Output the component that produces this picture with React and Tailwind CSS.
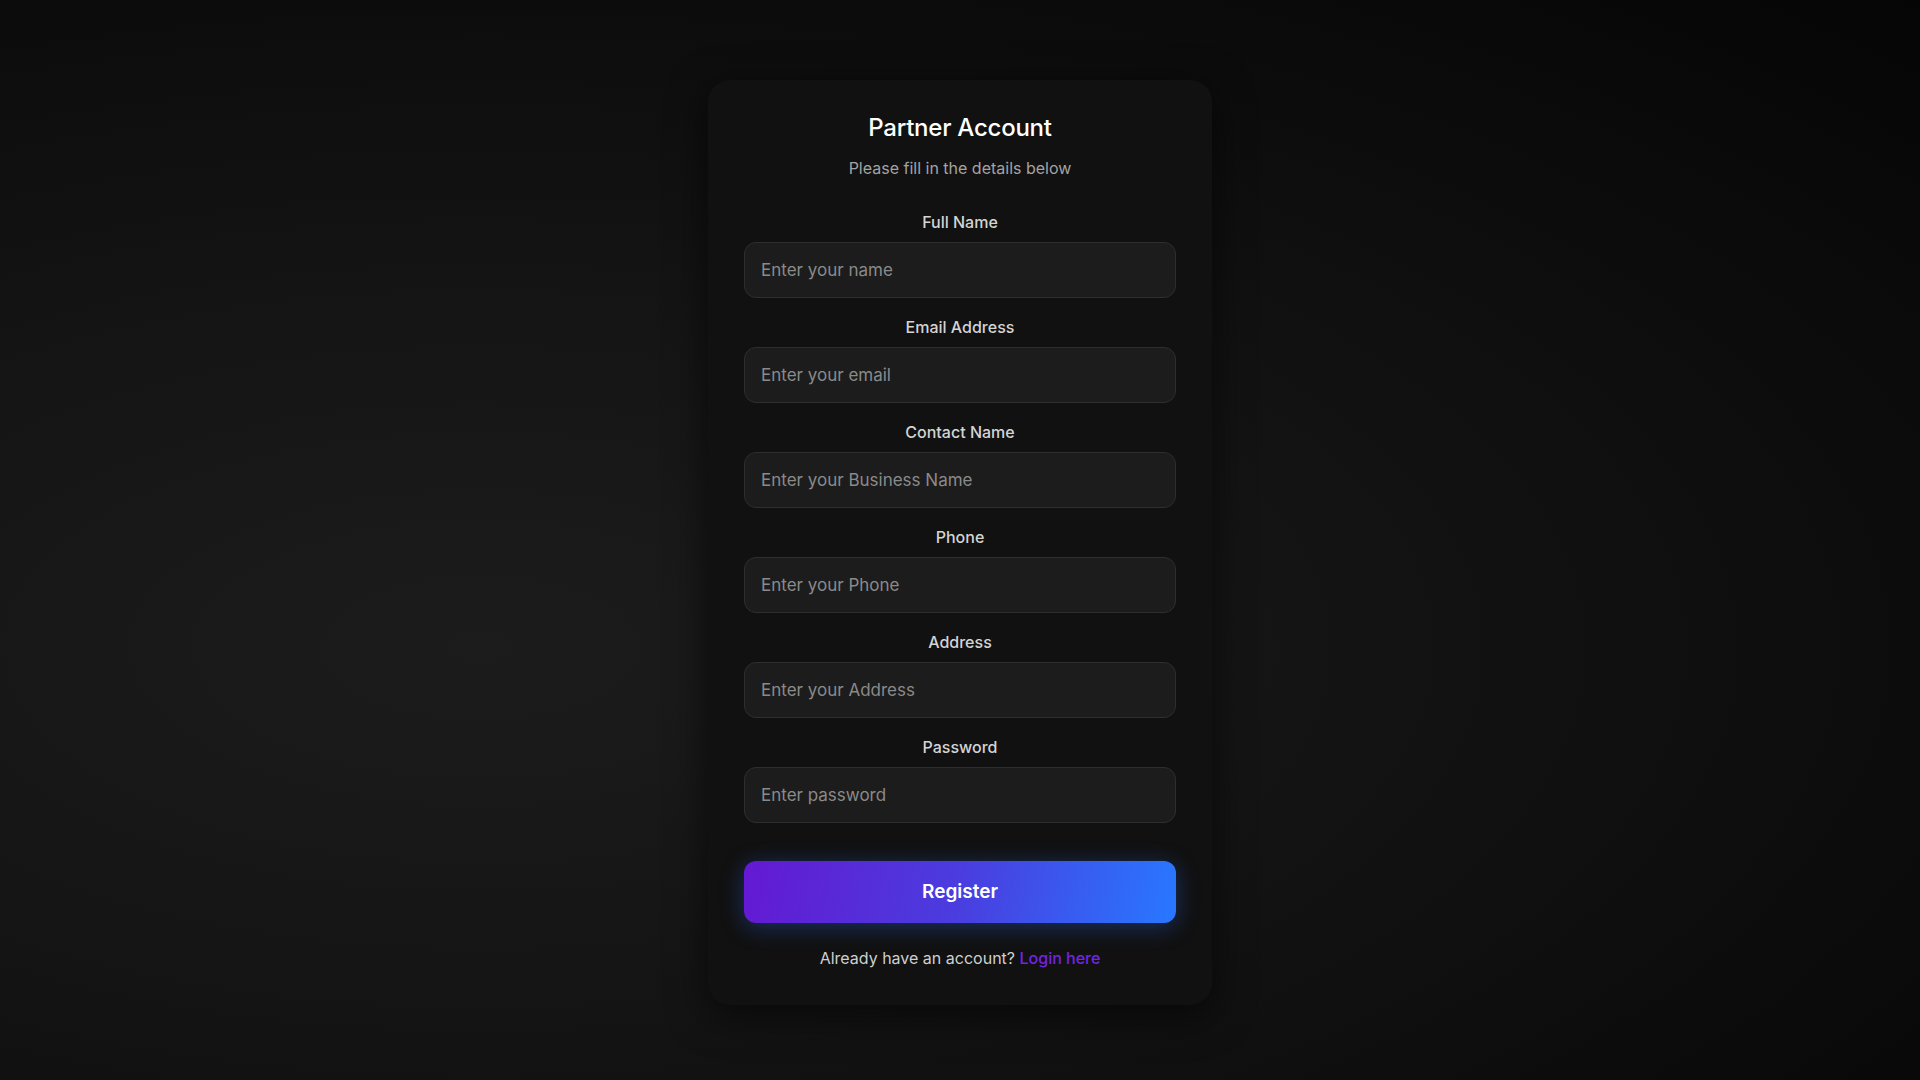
import React from "react";

const fields = [
  { label: "Full Name", placeholder: "Enter your name", type: "text" },
  { label: "Email Address", placeholder: "Enter your email", type: "email" },
  { label: "Contact Name", placeholder: "Enter your Business Name", type: "text" },
  { label: "Phone", placeholder: "Enter your Phone", type: "tel" },
  { label: "Address", placeholder: "Enter your Address", type: "text" },
  { label: "Password", placeholder: "Enter password", type: "password" },
];

export default function App() {
  return (
    <div
      className="min-h-screen w-full flex justify-center items-start pt-[80px] bg-[radial-gradient(ellipse_at_25%_60%,#1c1c1c_0%,#141414_40%,#050505_100%)]"
      style={{ fontFamily: "Inter, 'Noto Sans', sans-serif" }}
    >
      <div className="w-[504px] rounded-[22px] bg-[#111111] px-9 pt-8 pb-[35px] shadow-[0_10px_40px_rgba(0,0,0,0.6)] flex flex-col items-center">
        <h1 className="text-[24px] leading-8 font-medium text-white tracking-[-0.01em]">
          Partner Account
        </h1>
        <p className="mt-3 text-[16px] leading-6 text-[#a3a3a3]">
          Please fill in the details below
        </p>

        {/* Form fields */}
        <form
          className="mt-[30px] w-full flex flex-col gap-[17px]"
          onSubmit={(e) => e.preventDefault()}
        >
          {fields.map((f) => (
            <div key={f.label} className="flex flex-col items-center">
              <label className="text-[16px] leading-6 font-medium text-[#d4d4d4] mb-2">
                {f.label}
              </label>
              <input
                type={f.type}
                placeholder={f.placeholder}
                className="w-full h-[56px] rounded-[12px] bg-[#1c1c1c] border border-[#2e2e2e] px-4 text-[17px] text-white placeholder:text-[#8a8a8a] outline-none"
              />
            </div>
          ))}

          <button
            type="submit"
            className="mt-[21px] w-full h-[62px] rounded-[12px] bg-[linear-gradient(100deg,#6419d2_0%,#4a3ddf_50%,#2878ff_100%)] text-white text-[19px] font-semibold shadow-[0_4px_22px_rgba(40,110,255,0.35)]"
          >
            Register
          </button>
        </form>

        <p className="mt-[23px] text-[16px] leading-6 text-[#cfcfcf]">
          Already have an account?{" "}
          <a href="#" className="text-[#7424e6] font-medium">
            Login here
          </a>
        </p>
      </div>
    </div>
  );
}
